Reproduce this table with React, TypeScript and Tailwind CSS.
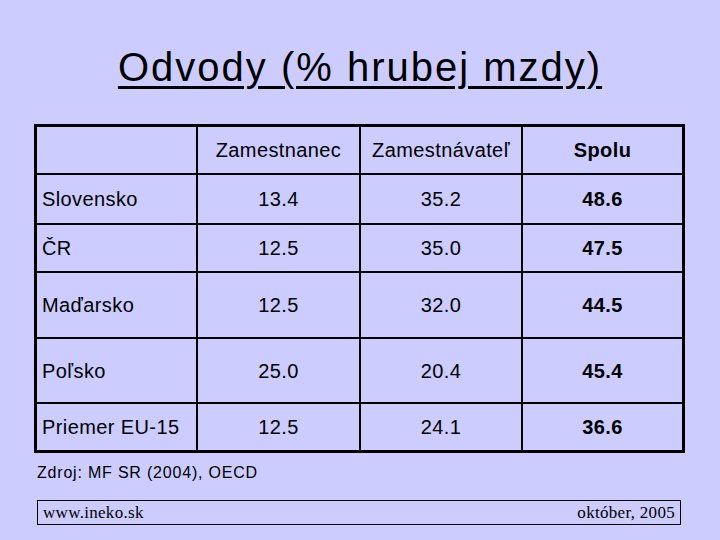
import React from "react";

const rows = [
  { name: "Slovensko", a: "13.4", b: "35.2", c: "48.6", h: "h-[50px]" },
  { name: "ČR", a: "12.5", b: "35.0", c: "47.5", h: "h-[48px]" },
  { name: "Maďarsko", a: "12.5", b: "32.0", c: "44.5", h: "h-[66px]" },
  { name: "Poľsko", a: "25.0", b: "20.4", c: "45.4", h: "h-[65px]" },
  { name: "Priemer EU-15", a: "12.5", b: "24.1", c: "36.6", h: "h-[46px]" },
];

export default function App() {
  const arial = { fontFamily: '"Liberation Sans", Arial, sans-serif' };
  return (
    <div
      className="w-[720px] h-[540px] bg-[#ccccff] text-black flex flex-col overflow-hidden"
      style={arial}
    >
      <div className="pt-[47px] h-[87px] text-center text-[40px] leading-[40px] tracking-[2px]">
        <span className="underline decoration-[3px] underline-offset-[5px]">
          Odvody (% hrubej mzdy)
        </span>
      </div>

      <div className="mt-[37px] ml-[34px] w-[651px] border-[3px] border-black">
        <div className="grid grid-cols-[161px_163px_162px_159px] text-[20px] tracking-[0.4px] h-[48px] border-b-2 border-black">
          <div className="border-r-2 border-black" />
          <div className="border-r-2 border-black flex items-center justify-center">Zamestnanec</div>
          <div className="border-r-2 border-black flex items-center justify-center">Zamestnávateľ</div>
          <div className="flex items-center justify-center font-bold">Spolu</div>
        </div>
        {rows.map((r, i) => (
          <div
            key={r.name}
            className={`grid grid-cols-[161px_163px_162px_159px] text-[20px] tracking-[0.4px] ${r.h} ${
              i < rows.length - 1 ? "border-b-2 border-black" : ""
            }`}
          >
            <div className="border-r-2 border-black flex items-center pl-[5px]">{r.name}</div>
            <div className="border-r-2 border-black flex items-center justify-center">{r.a}</div>
            <div className="border-r-2 border-black flex items-center justify-center">{r.b}</div>
            <div className="flex items-center justify-center font-bold">{r.c}</div>
          </div>
        ))}
      </div>

      <div className="mt-[10px] ml-[37px] text-[16px] leading-[20px] tracking-[0.8px]">
        Zdroj: MF SR (2004), OECD
      </div>

      <div
        className="mt-[17px] ml-[37px] w-[644px] h-[25px] border border-black flex items-center justify-between px-[5px] text-[17px] leading-[23px] tracking-[0.3px]"
        style={{ fontFamily: '"Liberation Serif", "Times New Roman", serif' }}
      >
        <span>www.ineko.sk</span>
        <span>október, 2005</span>
      </div>
    </div>
  );
}
